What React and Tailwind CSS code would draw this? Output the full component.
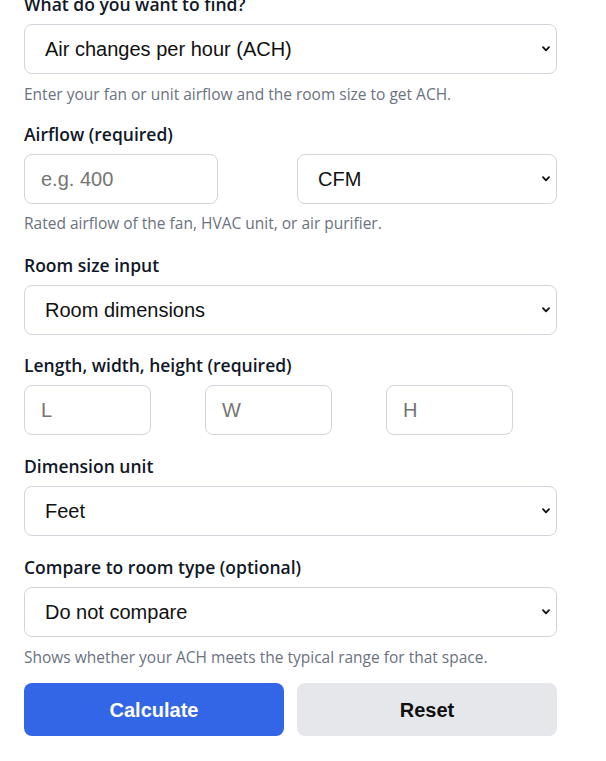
const labelCls = "block text-[17.5px] leading-6 font-semibold text-[#111827] mb-2";
const helpCls = "mt-[10px] text-[15.5px] leading-5 text-[#6b7280]";
const fieldCls = "h-[50px] rounded-lg border border-[#d1d5db] bg-white text-[20px] text-[#111111] outline-none";

const Select = ({ value, options, className = "" }) => (
    <div className={`relative ${className}`}>
        <select defaultValue={value} className={`${fieldCls} w-full appearance-none pl-5 pr-8`} style={{ fontFamily: '"Liberation Sans", Arial, sans-serif' }}>
            {options.map(o => <option key={o}>{o}</option>)}
        </select>
        <svg className="pointer-events-none absolute right-[7px] top-1/2 -translate-y-1/2" width="8" height="6" viewBox="0 0 8 6" fill="none">
            <path d="M1 1.2 L4 4.4 L7 1.2" stroke="#111" strokeWidth="1.8" strokeLinecap="round" strokeLinejoin="round" />
        </svg>
    </div>
);

const Input = ({ placeholder, className = "" }) => (
    <input type="text" placeholder={placeholder} className={`${fieldCls} px-4 placeholder:text-[#757575] ${className}`} style={{ fontFamily: '"Liberation Sans", Arial, sans-serif' }} />
);

export default function App() {
    return (
        <div className="min-h-[761px] bg-white px-6" style={{ fontFamily: '"Open Sans", "Noto Sans", sans-serif' }}>
            <div className="w-[533px] -mt-2">
                <div className="mb-[18px]">
                    <label className={labelCls}>What do you want to find?</label>
                    <Select className="w-full" value="Air changes per hour (ACH)" options={["Air changes per hour (ACH)", "Required airflow (CFM)", "Room volume"]} />
                    <p className={helpCls}>Enter your fan or unit airflow and the room size to get ACH.</p>
                </div>

                <div className="mb-5">
                    <label className={labelCls}>Airflow (required)</label>
                    <div className="flex justify-between">
                        <Input className="w-[194px]" placeholder="e.g. 400" />
                        <Select className="w-[260px]" value="CFM" options={["CFM", "m³/h", "L/s"]} />
                    </div>
                    <p className="mt-[9px] text-[15.5px] leading-5 text-[#6b7280]">Rated airflow of the fan, HVAC unit, or air purifier.</p>
                </div>

                <div className="mb-[18px]">
                    <label className={labelCls}>Room size input</label>
                    <Select className="w-full" value="Room dimensions" options={["Room dimensions", "Floor area and height", "Room volume"]} />
                </div>

                <div className="mb-[19px]">
                    <label className={labelCls}>Length, width, height (required)</label>
                    <div className="flex gap-[54px]">
                        <Input className="w-[127px]" placeholder="L" />
                        <Input className="w-[127px]" placeholder="W" />
                        <Input className="w-[127px]" placeholder="H" />
                    </div>
                </div>

                <div className="mb-[19px]">
                    <label className={labelCls}>Dimension unit</label>
                    <Select className="w-full" value="Feet" options={["Feet", "Meters"]} />
                </div>

                <div className="mb-4">
                    <label className={labelCls}>Compare to room type (optional)</label>
                    <Select className="w-full" value="Do not compare" options={["Do not compare", "Bedroom", "Office", "Classroom"]} />
                    <p className={helpCls}>Shows whether your ACH meets the typical range for that space.</p>
                </div>

                <div className="flex gap-[13px]" style={{ fontFamily: '"Liberation Sans", Arial, sans-serif' }}>
                    <button className="h-[53px] flex-1 rounded-lg bg-[#3366e6] text-[20px] font-bold text-white">Calculate</button>
                    <button className="h-[53px] flex-1 rounded-lg bg-[#e5e7eb] text-[20px] font-bold text-[#111111]">Reset</button>
                </div>
            </div>
        </div>
    );
}
